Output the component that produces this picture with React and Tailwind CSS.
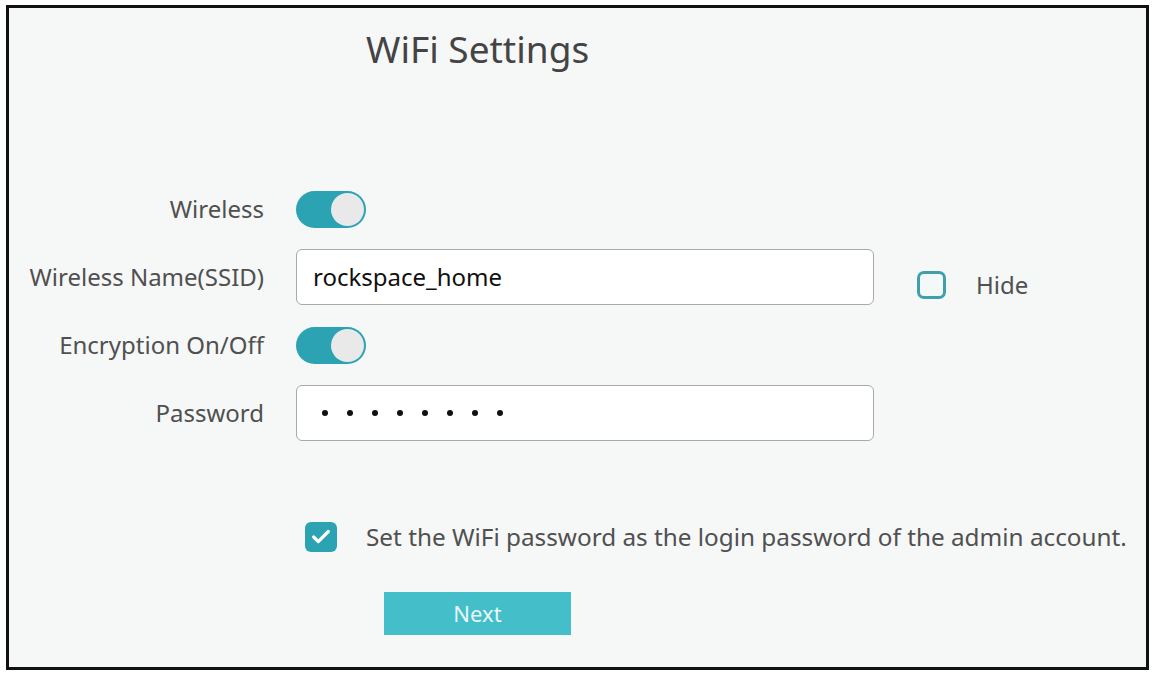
import { Check } from 'lucide-react'

const font = { fontFamily: '"Noto Sans", "Open Sans", sans-serif' }

function Toggle() {
  return (
    <div className="w-[70px] h-[37px] rounded-full bg-[#2ba3b3] flex items-center justify-end pr-[2px]">
      <div className="w-[33px] h-[33px] rounded-full bg-[#e9e9ea]" />
    </div>
  )
}

function Row({ label, children }) {
  return (
    <div className="flex items-center h-[56px]">
      <div className="w-[255px] text-right text-[24px] text-[#505050] shrink-0 whitespace-nowrap">{label}</div>
      <div className="ml-[32px] flex items-center flex-1">{children}</div>
    </div>
  )
}

export default function App() {
  return (
    <div className="w-[1155px] h-[677px] bg-white pt-[5px] pl-[6px]" style={font}>
      <div className="w-[1143px] h-[665px] border-[3px] border-[#111] bg-[#f6f7f7] flex flex-col">
        <h1 className="ml-[357px] mt-[19px] text-[37px] leading-[44px] text-[#444]">WiFi Settings</h1>

        <div className="mt-[110px] flex flex-col gap-[12px]">
          <Row label="Wireless">
            <Toggle />
          </Row>
          <Row label="Wireless Name(SSID)">
            <div className="w-[578px] h-[56px] rounded-[6px] border border-[#a9a9a9] bg-white flex items-center pl-[16px] text-[24px] text-[#111]">
              rockspace_home
            </div>
            <div className="ml-[43px] mt-[16px] flex items-center">
              <div className="w-[29px] h-[28px] rounded-[7px] border-[3px] border-[#3f9fac] bg-[#f3f8f9]" />
              <span className="ml-[30px] text-[24px] text-[#505050]">Hide</span>
            </div>
          </Row>
          <Row label="Encryption On/Off">
            <Toggle />
          </Row>
          <Row label="Password">
            <div className="w-[578px] h-[56px] rounded-[6px] border border-[#a9a9a9] bg-white flex items-center pl-[25px] gap-[19px]">
              {Array.from({ length: 8 }).map((_, i) => (
                <span key={i} className="w-[6px] h-[6px] rounded-full bg-[#111]" />
              ))}
            </div>
          </Row>
        </div>

        <div className="mt-[78px] ml-[296px] flex items-center">
          <div className="w-[32px] h-[30px] rounded-[6px] bg-[#2ba3b3] flex items-center justify-center">
            <Check size={22} strokeWidth={3.5} className="text-white" />
          </div>
          <span className="ml-[29px] text-[24.3px] text-[#505050] whitespace-nowrap">
            Set the WiFi password as the login password of the admin account.
          </span>
        </div>

        <div className="mt-[37px] ml-[375px]">
          <button className="w-[187px] h-[43px] bg-[#44bfca] text-[22px] text-[#e8f7f8]">Next</button>
        </div>
      </div>
    </div>
  )
}
